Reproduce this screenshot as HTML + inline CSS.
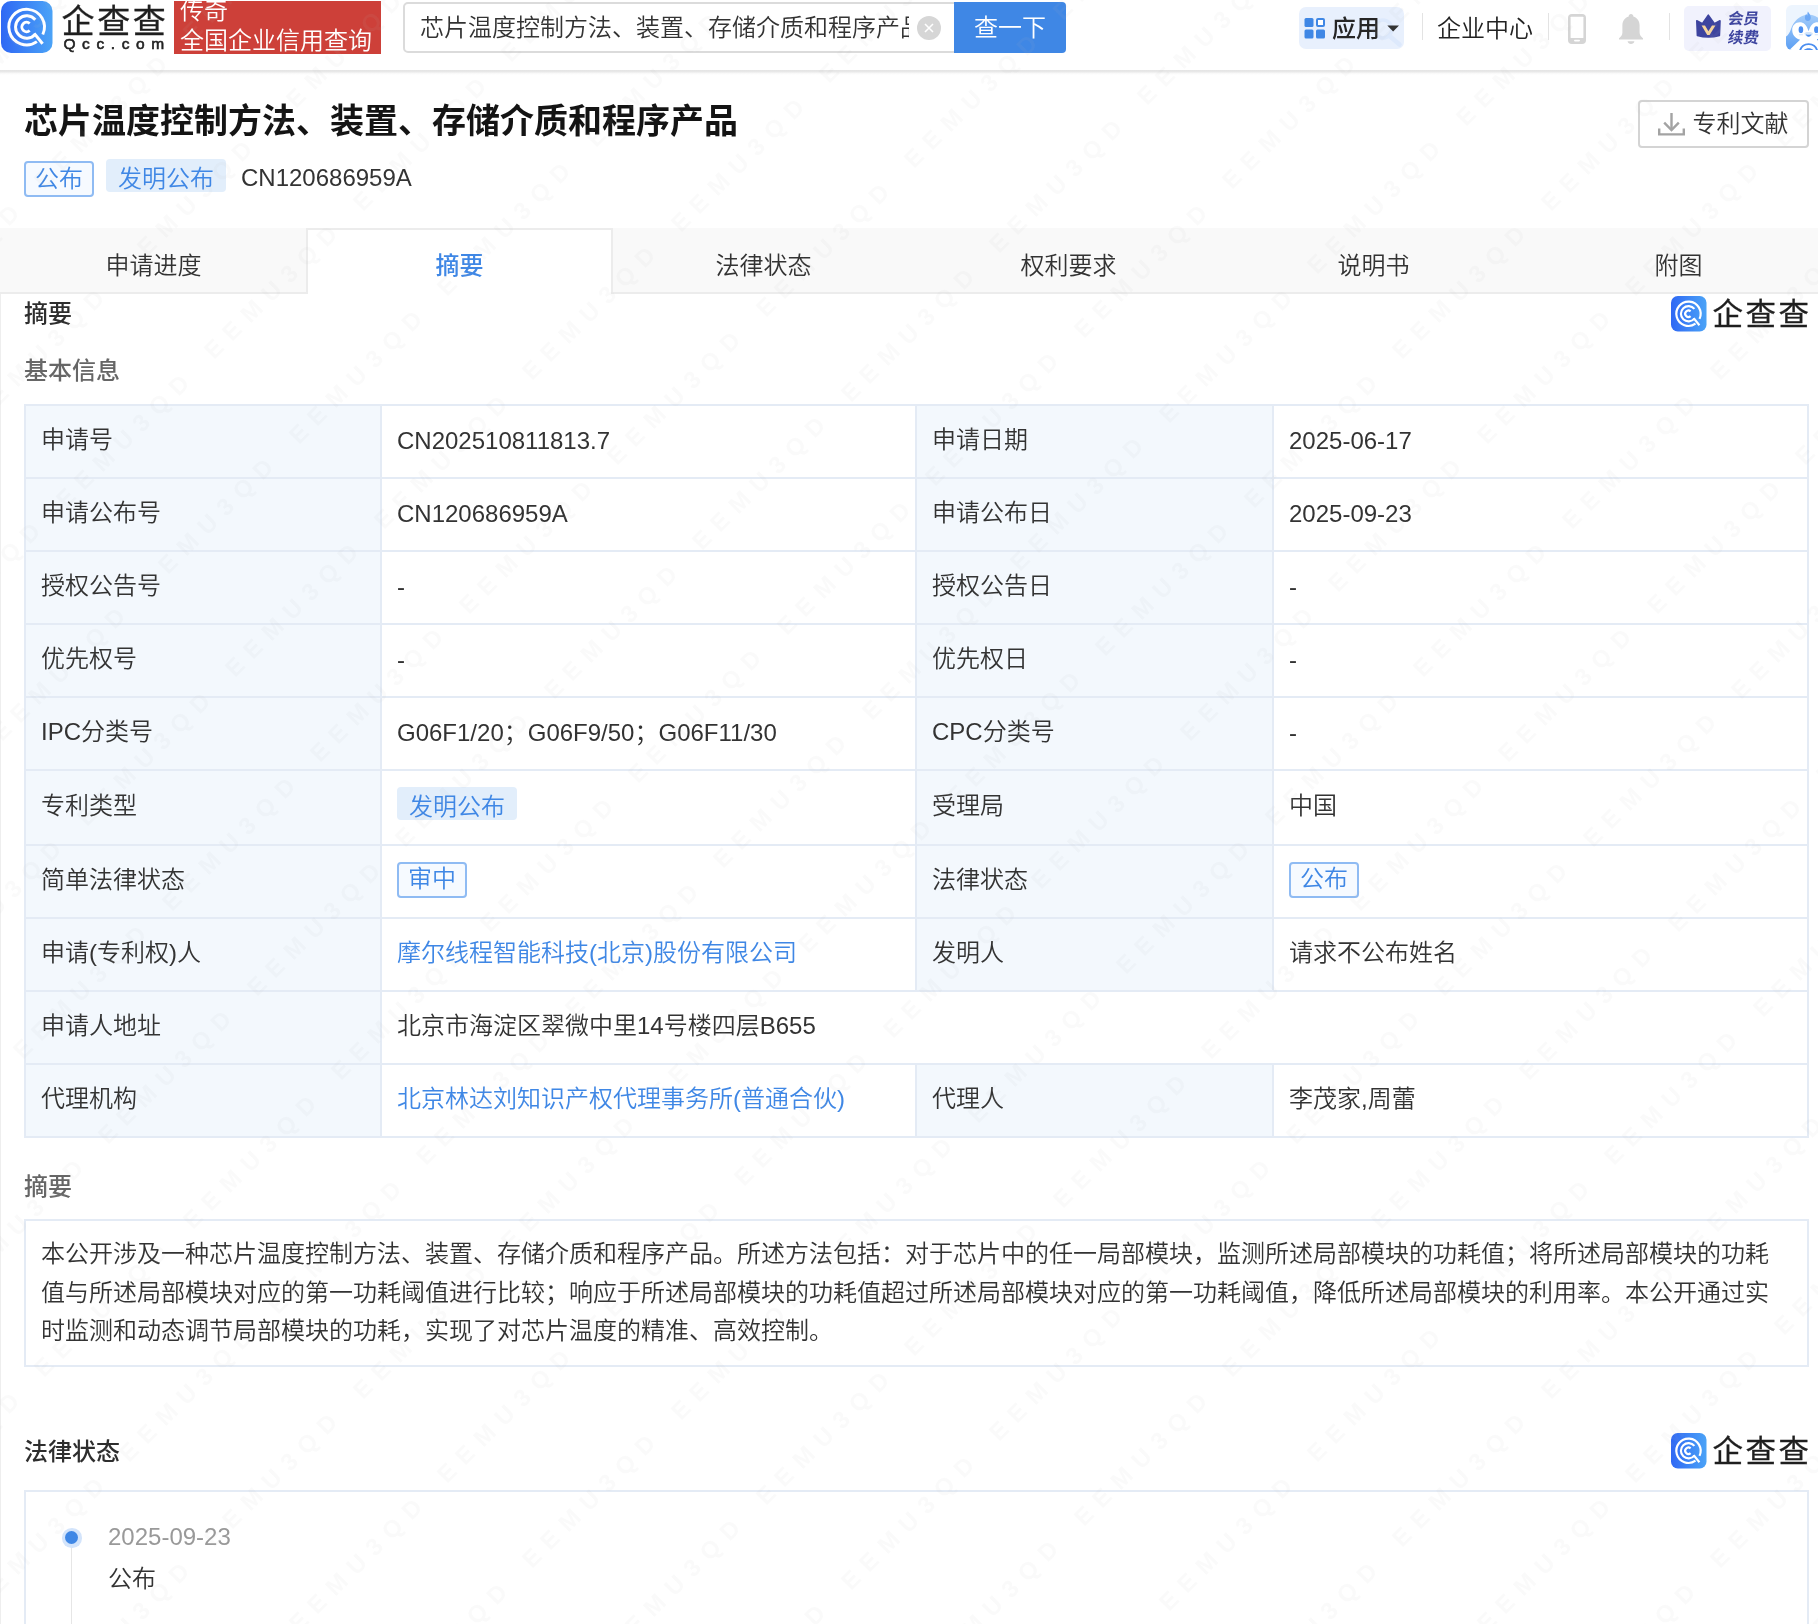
<!DOCTYPE html>
<html lang="zh-CN">
<head>
<meta charset="utf-8">
<title>芯片温度控制方法、装置、存储介质和程序产品 - 企查查</title>
<style>
*{box-sizing:border-box;margin:0;padding:0}
html,body{width:1818px;height:1624px;overflow:hidden;background:#fff}
body{font-family:"Liberation Sans","Noto Sans CJK SC",sans-serif;color:#333;font-size:24px;font-weight:350;position:relative}
.abs{position:absolute}
svg{position:absolute;display:block;overflow:visible}
/* ---------- header ---------- */
#hdr{position:absolute;left:0;top:0;width:1818px;height:70px;background:#fff}
#hline{position:absolute;left:0;top:70px;width:1818px;height:5px;background:linear-gradient(#e4e4e4 0,#e9e9e9 40%,rgba(240,240,240,.5) 60%,rgba(255,255,255,0) 100%)}
#logo-t{position:absolute;left:61.6px;top:0px;font-size:33px;line-height:44px;font-weight:400;-webkit-text-stroke:0.3px #1f1f1f;color:#1f1f1f;letter-spacing:2.6px;white-space:nowrap}
#logo-s{position:absolute;left:63.4px;top:35px;font-size:15.5px;line-height:18px;font-weight:400;color:#222;-webkit-text-stroke:0.6px #222;letter-spacing:6.6px;white-space:nowrap}
#red{position:absolute;left:174px;top:1px;width:207px;height:53px;background:#cd4039;color:#fff;font-size:24px;overflow:hidden;font-weight:350}
#red div{position:absolute;left:6px;white-space:nowrap;line-height:30px}
#srch{position:absolute;left:403px;top:2px;width:553px;height:51px;border:2px solid #dbdbdb;border-radius:5px 0 0 5px;background:#fff}
#srch span{position:absolute;left:15px;top:0;width:489px;height:47px;font-size:24px;line-height:47px;color:#333;white-space:nowrap;overflow:hidden}
#sbtn{position:absolute;left:954px;top:2px;width:112px;height:51px;background:#3f87e5;border-radius:0 4px 4px 0;color:#fff;font-size:24px;line-height:52px;text-align:center;font-weight:350}
#app{position:absolute;left:1299px;top:7px;width:105px;height:42px;border-radius:7px;background:#e8f0fd;overflow:hidden}
#app span{position:absolute;left:33px;top:0.5px;font-size:24px;line-height:42px;font-weight:500;color:#262626}
#qyzx{position:absolute;left:1437px;top:7.5px;font-size:24px;line-height:42px;color:#222}
.vsep{position:absolute;top:13px;width:1.3px;height:27px;background:#e3e3e3}
#vip{position:absolute;left:1684px;top:6px;width:87px;height:45px;border-radius:5px;background:#f1f2fd}
#vip span{position:absolute;left:43.5px;font-size:15.5px;line-height:20px;font-weight:700;color:#3d449f;white-space:nowrap;transform:skewX(-9deg)}
/* ---------- title ---------- */
#title{position:absolute;left:24px;top:97px;font-size:34px;line-height:48px;font-weight:bold;color:#141414;white-space:nowrap}
#dl{position:absolute;left:1638px;top:100px;width:171px;height:48px;border:2px solid #d4d4d4;border-radius:4px;color:#333}
#dl span{position:absolute;left:52.5px;top:0;font-size:24px;line-height:44px;white-space:nowrap}
.tag1{position:absolute;left:24px;top:161px;width:70px;height:36px;border:2px solid #8fbbf3;border-radius:4px;color:#3f87e5;font-size:24px;line-height:32px;text-align:center;background:#f6faff}
.tag2{position:absolute;left:106px;top:159px;width:120px;height:33px;border-radius:4px;color:#3f87e5;font-size:24px;line-height:39px;text-align:center;background:#e2eefb}
#pubno{position:absolute;left:241px;top:161px;font-size:24px;line-height:34px;color:#333}
/* ---------- tabs ---------- */
#tabs{position:absolute;left:0;top:228px;width:1818px;height:66px;background:#f9f9f9;border-bottom:2px solid #ececec}
.tab{position:absolute;top:0;width:305px;height:64px;text-align:center;font-size:24px;line-height:75px;color:#333}
.tab.on{background:#fff;color:#3f87e5;font-weight:500;border:2px solid #ececec;border-bottom:none;height:66px;line-height:71px}
h3{position:absolute;left:24px;font-size:24px;line-height:34px;font-weight:500;color:#2e2e2e;white-space:nowrap}
.sub{position:absolute;left:24px;font-size:24px;line-height:34px;color:#666;font-weight:500;white-space:nowrap}
/* ---------- table ---------- */
#tb{position:absolute;left:24px;top:404px;width:1785px;border-collapse:collapse;table-layout:fixed}
#tb td{border:2px solid #e4ebf5;height:73px;padding:0 15px;font-size:24px;line-height:30px;color:#333;vertical-align:middle;white-space:nowrap}
#tb td.l{background:#f3f8fd}
#tb td>span{position:relative;display:inline-block}
#tb .c{top:-2px}
#tb .n{top:-1px}
#tb a{color:#3f87e5;text-decoration:none}
.t1{display:inline-block;width:120px;height:33px;line-height:37px;border-radius:4px;color:#3f87e5;background:#e2eefb;text-align:center;top:-3.5px;line-height:39px}
.t2{display:inline-block;width:70px;height:36px;line-height:30px;border:2px solid #8fbbf3;border-radius:4px;color:#3f87e5;background:#f6faff;text-align:center;top:-1.8px}
#abs{position:absolute;left:24px;top:1219px;width:1785px;height:148px;border:2px solid #e4ebf5;padding:14px 15px 0 15px;font-size:24px;line-height:38.5px;color:#333}
#law{position:absolute;left:24px;top:1490px;width:1785px;height:200px;border:2px solid #e4ebf5}
.wm{position:absolute;left:1671px;width:140px;height:36px}
.wm b{position:absolute;left:41.6px;top:-2px;font-size:30.5px;line-height:40px;font-weight:400;-webkit-text-stroke:0.3px #1f1f1f;color:#1f1f1f;letter-spacing:2.4px;white-space:nowrap}
#ledge{position:absolute;left:0;top:228px;width:1px;height:1400px;background:#eee}
#wmk{position:absolute;left:0;top:0;width:1818px;height:1624px;overflow:hidden;pointer-events:none}#wmk i{position:absolute;font-style:normal;font-weight:700;font-size:24px;line-height:24px;letter-spacing:9.6px;color:rgba(185,185,185,.075);white-space:nowrap;transform-origin:0 0;transform:rotate(-45deg) translate(-8px,-12px)}
#page{position:absolute;left:0;top:0;width:1818px;height:1624px;will-change:transform}
</style>
</head>
<body>
<div id="page">
<div id="hdr">
  <svg style="left:1px;top:1px" width="52" height="52" viewBox="0 0 52 52">
    <defs><linearGradient id="lg" x1="0" y1="0" x2="1" y2="0"><stop offset="0" stop-color="#2f68f4"/><stop offset="1" stop-color="#4ba3f7"/></linearGradient></defs>
    <rect x="0" y="0" width="51.5" height="52" rx="10" fill="url(#lg)"/>
    <g fill="none" stroke="#fff" stroke-width="2.9" stroke-linecap="butt">
      <path d="M35.9 40.6 A17.8 17.8 0 1 1 41.8 33.5"/>
      <path d="M34.3 33.2 A11.2 11.2 0 1 1 34.3 18.8"/>
      <path d="M28.7 29.5 A4.7 4.7 0 1 1 28.7 22.5"/>
      <path d="M33.2 32.4 L41.6 42.8" stroke-width="3"/>
    </g>
  </svg>
  <div id="logo-t">企查查</div>
  <div id="logo-s">Qcc.com</div>
  <div id="red"><div style="top:-5.5px">传奇</div><div style="top:25px">全国企业信用查询</div></div>
  <div id="srch"><span>芯片温度控制方法、装置、存储介质和程序产品</span></div>
  <svg style="left:917px;top:16px" width="24" height="24" viewBox="0 0 24 24"><circle cx="12" cy="12" r="12" fill="#d6d6d6"/><path d="M8 8 L16 16 M16 8 L8 16" stroke="#fff" stroke-width="1.6" fill="none"/></svg>
  <div id="sbtn">查一下</div>
  <div id="app">
    <svg style="left:0;top:0" width="105" height="42" viewBox="0 0 105 42"><circle cx="83.8" cy="22" r="9" fill="none" stroke="#dde9fc" stroke-width="3.6"/><path d="M90.6 29 L100.5 37.5" stroke="#dde9fc" stroke-width="4.6" stroke-linecap="round"/>
      <rect x="5.5" y="11" width="9" height="9" rx="1.5" fill="#3f87e5"/><rect x="5.5" y="22.5" width="9" height="9" rx="1.5" fill="#3f87e5"/><rect x="17" y="22.5" width="9" height="9" rx="1.5" fill="#3f87e5"/><rect x="18" y="12" width="7" height="7" rx="1" fill="#fff" stroke="#3f87e5" stroke-width="2"/>
      <path d="M88.3 18.4 H100 L94.15 24.6 Z" fill="#333"/>
    </svg>
    <span>应用</span>
  </div>
  <div class="vsep" style="left:1421.5px"></div>
  <div id="qyzx">企业中心</div>
  <div class="vsep" style="left:1548px"></div>
  <svg style="left:1568px;top:14px" width="18" height="30" viewBox="0 0 18 30"><rect x="0" y="0" width="18" height="30" rx="4" fill="#d5d5d5"/><rect x="2.6" y="2.8" width="12.8" height="21.2" rx="0.5" fill="#fff"/><rect x="6" y="25.8" width="6" height="1.6" rx=".8" fill="#fff"/></svg>
  <svg style="left:1619px;top:14px" width="24" height="30" viewBox="0 0 24 30"><path fill="#d5d5d5" d="M12 0 C13.4 0 14.3 1 14.3 2.2 L14.3 2.6 C18.2 3.7 20.6 7.2 20.6 11.5 L20.6 18.5 C20.6 21 22 22.8 24 24.3 L24 25.6 L0 25.6 L0 24.3 C2 22.8 3.4 21 3.4 18.5 L3.4 11.5 C3.4 7.2 5.8 3.7 9.7 2.6 L9.7 2.2 C9.7 1 10.6 0 12 0 Z M8.6 27.2 L15.4 27.2 C15.1 28.9 13.7 30 12 30 C10.3 30 8.9 28.9 8.6 27.2 Z"/></svg>
  <div class="vsep" style="left:1669px"></div>
  <div id="vip">
    <svg style="left:11px;top:8px" width="27" height="25" viewBox="0 0 27 25"><path fill="#3d449f" stroke="#3d449f" stroke-width="1.6" stroke-linejoin="round" d="M1.8 6.8 L7.4 9.6 L13.3 1.2 L19.4 9.6 L25 6.8 L24.4 21.4 Q13.3 24.6 2.4 21.4 Z"/><path d="M6.6 11.4 L10 11.4 L13.4 17.2 L17 11.4 L20.4 11.4 L14.6 21 L12.2 21 Z" fill="#f7d59c"/></svg>
    <span style="top:2.5px">会员</span><span style="top:21.8px">续费</span>
  </div>
  <svg style="left:1786px;top:5px" width="45" height="45" viewBox="0 0 45 45">
    <defs><clipPath id="av"><rect x="0" y="0" width="45" height="45" rx="6"/></clipPath>
    <linearGradient id="pg" x1="0" y1="0" x2="0" y2="1"><stop offset="0" stop-color="#a5cdfa"/><stop offset="1" stop-color="#5c9ff3"/></linearGradient></defs>
    <g clip-path="url(#av)">
      <rect width="45" height="45" fill="#edf5fe"/>
      <path fill="url(#pg)" d="M22.6 9.6 C13 10 7.5 17 5 24 C3.6 28 2 30.5 0 31.4 L0 45 L45 45 L45 31.4 C43 30.5 41.6 28 40.2 24 C37.7 17 32.2 10 22.6 9.6 Z"/>
      <path fill="#fff" d="M13.7 17.2 C17.5 17.2 20.6 19.5 22.6 26.2 C24.6 19.5 27.7 17.2 31.5 17.2 C36 17.2 39.2 20.6 39.2 24.7 C39.2 28 38 30 42 34 L45 45 L3.4 45 L14.1 34.7 C8 33 6.2 28.5 6.2 24.7 C6.2 20.6 9.4 17.2 13.7 17.2 Z"/>
      <path fill="#6ea9f6" d="M21.9 6.4 C23.6 9 25 10.5 24.8 13 C24.6 15 23.4 16 21.9 16 C20.2 16 19 14.8 18.9 13 C18.8 11.3 19.6 10 20.2 8.8 C20.6 10 21 10.6 21.4 10.8 C21.2 9.2 21.4 7.8 21.9 6.4 Z"/>
      <ellipse cx="14.9" cy="24.7" rx="2.3" ry="3.4" fill="#4b8ef0"/><ellipse cx="30.4" cy="24.7" rx="2.3" ry="3.4" fill="#4b8ef0"/>
      <rect x="12.8" y="29.2" width="4.2" height="1" rx=".5" fill="#cfe3fb"/><rect x="28.6" y="29.2" width="4.2" height="1" rx=".5" fill="#cfe3fb"/>
      <path fill="#d3e6fc" d="M18.5 28.6 C18.5 27.6 19.6 27 22.6 27 C25.6 27 26.7 27.6 26.7 28.6 C26.7 30.6 24.8 31.8 22.6 31.8 C20.4 31.8 18.5 30.6 18.5 28.6 Z"/>
      <path fill="#4b8ef0" d="M19.8 29.2 C21.6 29.9 23.6 29.9 25.4 29.2 C25 30.8 23.9 31.7 22.6 31.7 C21.3 31.7 20.2 30.8 19.8 29.2 Z"/>
      <path fill="none" stroke="#4b8ef0" stroke-width="1.9" d="M14 45.5 A9 9 0 0 1 31.2 45.5"/>
      <path fill="#4b8ef0" d="M17.8 45 C20.5 42.6 24.7 42.6 27.4 45 Z"/>
      <rect x="31" y="34.2" width="3" height="1" fill="#4b8ef0"/>
    </g>
  </svg>
</div>
<div id="hline"></div>
<div id="ledge"></div>
<div id="title">芯片温度控制方法、装置、存储介质和程序产品</div>
<div id="dl">
  <svg style="left:18px;top:11px" width="27" height="23" viewBox="0 0 27 23"><g fill="none" stroke="#a3a3a3" stroke-width="2.4"><path d="M13.5 0 V17"/><path d="M6.2 9.6 L13.5 17 L20.8 9.6"/><path d="M1.2 15.6 V21.4 H25.8 V15.6"/></g></svg>
  <span>专利文献</span>
</div>
<div class="tag1">公布</div><div class="tag2">发明公布</div><div id="pubno">CN120686959A</div>
<div id="tabs">
  <div class="tab" style="left:0;width:307px">申请进度</div>
  <div class="tab on" style="left:306px;width:307px">摘要</div>
  <div class="tab" style="left:611px">法律状态</div>
  <div class="tab" style="left:916px">权利要求</div>
  <div class="tab" style="left:1221px">说明书</div>
  <div class="tab" style="left:1526px">附图</div>
</div>
<h3 style="top:297px">摘要</h3>
<div class="wm" style="top:296px"><svg style="left:0;top:0" width="35.5" height="35.5" viewBox="0 0 52 52"><rect x="0" y="0" width="52" height="52" rx="10" fill="url(#lg)"/><g fill="none" stroke="#fff" stroke-width="3.2"><path d="M35.9 40.6 A17.8 17.8 0 1 1 41.8 33.5"/><path d="M34.3 33.2 A11.2 11.2 0 1 1 34.3 18.8"/><path d="M28.7 29.5 A4.7 4.7 0 1 1 28.7 22.5"/><path d="M33.2 32.4 L41.6 42.8"/></g></svg><b>企查查</b></div>
<div class="sub" style="top:354px">基本信息</div>
<table id="tb">
<colgroup><col style="width:356px"><col style="width:535px"><col style="width:357px"><col style="width:535px"></colgroup>
<tr><td class="l"><span class="c">申请号</span></td><td><span class="n">CN202510811813.7</span></td><td class="l"><span class="c">申请日期</span></td><td><span class="n">2025-06-17</span></td></tr>
<tr><td class="l"><span class="c">申请公布号</span></td><td><span class="n">CN120686959A</span></td><td class="l"><span class="c">申请公布日</span></td><td><span class="n">2025-09-23</span></td></tr>
<tr><td class="l"><span class="c">授权公告号</span></td><td><span class="n">-</span></td><td class="l"><span class="c">授权公告日</span></td><td><span class="n">-</span></td></tr>
<tr><td class="l"><span class="c">优先权号</span></td><td><span class="n">-</span></td><td class="l"><span class="c">优先权日</span></td><td><span class="n">-</span></td></tr>
<tr><td class="l"><span class="c">IPC分类号</span></td><td><span class="n">G06F1/20；G06F9/50；G06F11/30</span></td><td class="l"><span class="c">CPC分类号</span></td><td><span class="n">-</span></td></tr>
<tr style="height:75px"><td class="l"><span class="c">专利类型</span></td><td><span class="t1">发明公布</span></td><td class="l"><span class="c">受理局</span></td><td><span class="c">中国</span></td></tr>
<tr><td class="l"><span class="c">简单法律状态</span></td><td><span class="t2">审中</span></td><td class="l"><span class="c">法律状态</span></td><td><span class="t2">公布</span></td></tr>
<tr><td class="l"><span class="c">申请(专利权)人</span></td><td><span class="c"><a>摩尔线程智能科技(北京)股份有限公司</a></span></td><td class="l"><span class="c">发明人</span></td><td><span class="c">请求不公布姓名</span></td></tr>
<tr><td class="l"><span class="c">申请人地址</span></td><td colspan="3"><span class="c">北京市海淀区翠微中里14号楼四层B655</span></td></tr>
<tr><td class="l"><span class="c">代理机构</span></td><td><span class="c"><a>北京林达刘知识产权代理事务所(普通合伙)</a></span></td><td class="l"><span class="c">代理人</span></td><td><span class="c">李茂家,周蕾</span></td></tr>
</table>
<div class="sub" style="top:1170px">摘要</div>
<div id="abs">本公开涉及一种芯片温度控制方法、装置、存储介质和程序产品。所述方法包括：对于芯片中的任一局部模块，监测所述局部模块的功耗值；将所述局部模块的功耗值与所述局部模块对应的第一功耗阈值进行比较；响应于所述局部模块的功耗值超过所述局部模块对应的第一功耗阈值，降低所述局部模块的利用率。本公开通过实时监测和动态调节局部模块的功耗，实现了对芯片温度的精准、高效控制。</div>
<h3 style="top:1435px">法律状态</h3>
<div class="wm" style="top:1433px"><svg style="left:0;top:0" width="35.5" height="35.5" viewBox="0 0 52 52"><rect x="0" y="0" width="52" height="52" rx="10" fill="url(#lg)"/><g fill="none" stroke="#fff" stroke-width="3.2"><path d="M35.9 40.6 A17.8 17.8 0 1 1 41.8 33.5"/><path d="M34.3 33.2 A11.2 11.2 0 1 1 34.3 18.8"/><path d="M28.7 29.5 A4.7 4.7 0 1 1 28.7 22.5"/><path d="M33.2 32.4 L41.6 42.8"/></g></svg><b>企查查</b></div>
<div id="law">
  <div class="abs" style="left:45px;top:54px;width:1px;height:150px;background:#e6e6e6"></div>
  <div class="abs" style="left:36px;top:36px;width:19.5px;height:19.5px;border-radius:50%;background:#d3e4fb"></div>
  <div class="abs" style="left:39.3px;top:39.3px;width:13px;height:13px;border-radius:50%;background:#3f87e5"></div>
  <div class="abs" style="left:82px;top:28px;font-size:24px;line-height:34px;color:#999;font-weight:400">2025-09-23</div>
  <div class="abs" style="left:82px;top:69.5px;font-size:24px;line-height:34px;color:#333">公布</div>
</div>
</div>
<!--WM--><div id="wmk"><i style="left:-104.1px;top:1515.8px">EEMU3QD</i><i style="left:-19.3px;top:1600.7px">EEMU3QD</i><i style="left:65.6px;top:1685.5px">EEMU3QD</i><i style="left:-125.4px;top:1197.6px">EEMU3QD</i><i style="left:-40.5px;top:1282.5px">EEMU3QD</i><i style="left:44.3px;top:1367.3px">EEMU3QD</i><i style="left:129.2px;top:1452.2px">EEMU3QD</i><i style="left:214.1px;top:1537.0px">EEMU3QD</i><i style="left:298.9px;top:1621.9px">EEMU3QD</i><i style="left:383.8px;top:1706.7px">EEMU3QD</i><i style="left:-61.7px;top:964.3px">EEMU3QD</i><i style="left:23.1px;top:1049.1px">EEMU3QD</i><i style="left:108.0px;top:1134.0px">EEMU3QD</i><i style="left:192.8px;top:1218.8px">EEMU3QD</i><i style="left:277.7px;top:1303.7px">EEMU3QD</i><i style="left:362.5px;top:1388.5px">EEMU3QD</i><i style="left:447.4px;top:1473.4px">EEMU3QD</i><i style="left:532.3px;top:1558.3px">EEMU3QD</i><i style="left:617.1px;top:1643.1px">EEMU3QD</i><i style="left:702.0px;top:1728.0px">EEMU3QD</i><i style="left:-82.9px;top:646.1px">EEMU3QD</i><i style="left:1.9px;top:730.9px">EEMU3QD</i><i style="left:86.8px;top:815.8px">EEMU3QD</i><i style="left:171.6px;top:900.6px">EEMU3QD</i><i style="left:256.5px;top:985.5px">EEMU3QD</i><i style="left:341.3px;top:1070.3px">EEMU3QD</i><i style="left:426.2px;top:1155.2px">EEMU3QD</i><i style="left:511.0px;top:1240.1px">EEMU3QD</i><i style="left:595.9px;top:1324.9px">EEMU3QD</i><i style="left:680.7px;top:1409.8px">EEMU3QD</i><i style="left:765.6px;top:1494.6px">EEMU3QD</i><i style="left:850.5px;top:1579.5px">EEMU3QD</i><i style="left:935.3px;top:1664.3px">EEMU3QD</i><i style="left:1020.2px;top:1749.2px">EEMU3QD</i><i style="left:-104.1px;top:327.9px">EEMU3QD</i><i style="left:-19.3px;top:412.7px">EEMU3QD</i><i style="left:65.6px;top:497.6px">EEMU3QD</i><i style="left:150.4px;top:582.4px">EEMU3QD</i><i style="left:235.3px;top:667.3px">EEMU3QD</i><i style="left:320.1px;top:752.2px">EEMU3QD</i><i style="left:405.0px;top:837.0px">EEMU3QD</i><i style="left:489.8px;top:921.9px">EEMU3QD</i><i style="left:574.7px;top:1006.7px">EEMU3QD</i><i style="left:659.5px;top:1091.6px">EEMU3QD</i><i style="left:744.4px;top:1176.4px">EEMU3QD</i><i style="left:829.2px;top:1261.3px">EEMU3QD</i><i style="left:914.1px;top:1346.1px">EEMU3QD</i><i style="left:998.9px;top:1431.0px">EEMU3QD</i><i style="left:1083.8px;top:1515.8px">EEMU3QD</i><i style="left:1168.6px;top:1600.7px">EEMU3QD</i><i style="left:1253.5px;top:1685.5px">EEMU3QD</i><i style="left:-125.4px;top:9.7px">EEMU3QD</i><i style="left:-40.5px;top:94.5px">EEMU3QD</i><i style="left:44.3px;top:179.4px">EEMU3QD</i><i style="left:129.2px;top:264.2px">EEMU3QD</i><i style="left:214.1px;top:349.1px">EEMU3QD</i><i style="left:298.9px;top:434.0px">EEMU3QD</i><i style="left:383.8px;top:518.8px">EEMU3QD</i><i style="left:468.6px;top:603.7px">EEMU3QD</i><i style="left:553.5px;top:688.5px">EEMU3QD</i><i style="left:638.3px;top:773.4px">EEMU3QD</i><i style="left:723.2px;top:858.2px">EEMU3QD</i><i style="left:808.0px;top:943.1px">EEMU3QD</i><i style="left:892.9px;top:1027.9px">EEMU3QD</i><i style="left:977.7px;top:1112.8px">EEMU3QD</i><i style="left:1062.6px;top:1197.6px">EEMU3QD</i><i style="left:1147.4px;top:1282.5px">EEMU3QD</i><i style="left:1232.3px;top:1367.3px">EEMU3QD</i><i style="left:1317.1px;top:1452.2px">EEMU3QD</i><i style="left:1402.0px;top:1537.0px">EEMU3QD</i><i style="left:1486.8px;top:1621.9px">EEMU3QD</i><i style="left:1571.7px;top:1706.7px">EEMU3QD</i><i style="left:192.8px;top:30.9px">EEMU3QD</i><i style="left:277.7px;top:115.8px">EEMU3QD</i><i style="left:362.5px;top:200.6px">EEMU3QD</i><i style="left:447.4px;top:285.5px">EEMU3QD</i><i style="left:532.3px;top:370.3px">EEMU3QD</i><i style="left:617.1px;top:455.2px">EEMU3QD</i><i style="left:702.0px;top:540.0px">EEMU3QD</i><i style="left:786.8px;top:624.9px">EEMU3QD</i><i style="left:871.7px;top:709.7px">EEMU3QD</i><i style="left:956.5px;top:794.6px">EEMU3QD</i><i style="left:1041.4px;top:879.4px">EEMU3QD</i><i style="left:1126.2px;top:964.3px">EEMU3QD</i><i style="left:1211.1px;top:1049.1px">EEMU3QD</i><i style="left:1295.9px;top:1134.0px">EEMU3QD</i><i style="left:1380.8px;top:1218.8px">EEMU3QD</i><i style="left:1465.6px;top:1303.7px">EEMU3QD</i><i style="left:1550.5px;top:1388.5px">EEMU3QD</i><i style="left:1635.3px;top:1473.4px">EEMU3QD</i><i style="left:1720.2px;top:1558.3px">EEMU3QD</i><i style="left:1805.0px;top:1643.1px">EEMU3QD</i><i style="left:511.0px;top:52.1px">EEMU3QD</i><i style="left:595.9px;top:137.0px">EEMU3QD</i><i style="left:680.7px;top:221.8px">EEMU3QD</i><i style="left:765.6px;top:306.7px">EEMU3QD</i><i style="left:850.5px;top:391.5px">EEMU3QD</i><i style="left:935.3px;top:476.4px">EEMU3QD</i><i style="left:1020.2px;top:561.2px">EEMU3QD</i><i style="left:1105.0px;top:646.1px">EEMU3QD</i><i style="left:1189.9px;top:730.9px">EEMU3QD</i><i style="left:1274.7px;top:815.8px">EEMU3QD</i><i style="left:1359.6px;top:900.6px">EEMU3QD</i><i style="left:1444.4px;top:985.5px">EEMU3QD</i><i style="left:1529.3px;top:1070.3px">EEMU3QD</i><i style="left:1614.1px;top:1155.2px">EEMU3QD</i><i style="left:1699.0px;top:1240.1px">EEMU3QD</i><i style="left:1783.8px;top:1324.9px">EEMU3QD</i><i style="left:744.4px;top:-11.5px">EEMU3QD</i><i style="left:829.2px;top:73.3px">EEMU3QD</i><i style="left:914.1px;top:158.2px">EEMU3QD</i><i style="left:998.9px;top:243.0px">EEMU3QD</i><i style="left:1083.8px;top:327.9px">EEMU3QD</i><i style="left:1168.6px;top:412.7px">EEMU3QD</i><i style="left:1253.5px;top:497.6px">EEMU3QD</i><i style="left:1338.4px;top:582.4px">EEMU3QD</i><i style="left:1423.2px;top:667.3px">EEMU3QD</i><i style="left:1508.1px;top:752.2px">EEMU3QD</i><i style="left:1592.9px;top:837.0px">EEMU3QD</i><i style="left:1677.8px;top:921.9px">EEMU3QD</i><i style="left:1762.6px;top:1006.7px">EEMU3QD</i><i style="left:1062.6px;top:9.7px">EEMU3QD</i><i style="left:1147.4px;top:94.5px">EEMU3QD</i><i style="left:1232.3px;top:179.4px">EEMU3QD</i><i style="left:1317.1px;top:264.2px">EEMU3QD</i><i style="left:1402.0px;top:349.1px">EEMU3QD</i><i style="left:1486.8px;top:434.0px">EEMU3QD</i><i style="left:1571.7px;top:518.8px">EEMU3QD</i><i style="left:1656.6px;top:603.7px">EEMU3QD</i><i style="left:1741.4px;top:688.5px">EEMU3QD</i><i style="left:1826.3px;top:773.4px">EEMU3QD</i><i style="left:1380.8px;top:30.9px">EEMU3QD</i><i style="left:1465.6px;top:115.8px">EEMU3QD</i><i style="left:1550.5px;top:200.6px">EEMU3QD</i><i style="left:1635.3px;top:285.5px">EEMU3QD</i><i style="left:1720.2px;top:370.3px">EEMU3QD</i><i style="left:1805.0px;top:455.2px">EEMU3QD</i><i style="left:1699.0px;top:52.1px">EEMU3QD</i><i style="left:1783.8px;top:137.0px">EEMU3QD</i></div><!--/WM-->
</body>
</html>
